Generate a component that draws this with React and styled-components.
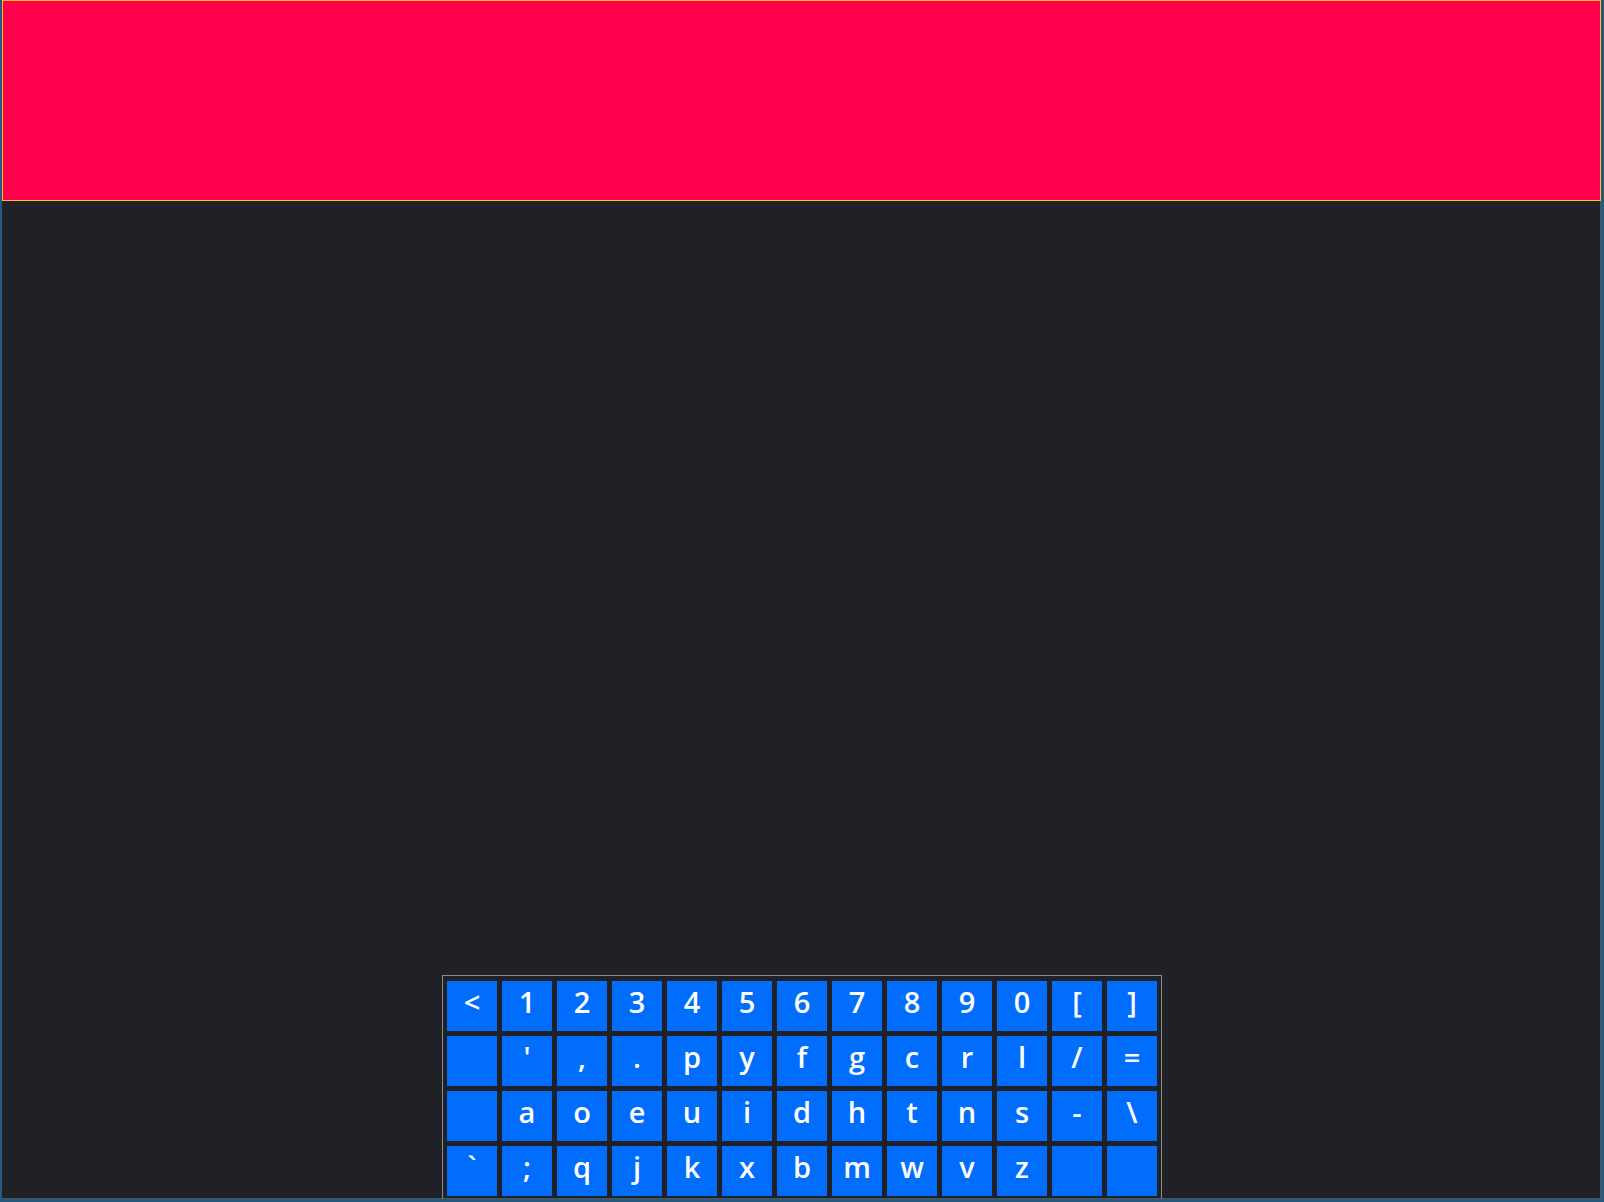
import React from "react";
import styled, { createGlobalStyle } from "styled-components";

const GlobalStyle = createGlobalStyle`
  html, body {
    margin: 0;
    padding: 0;
    background: #25597f;
  }
  #root {
    padding: 0 3px 3px 2px;
  }
`;

const rows = [
  ["<", "1", "2", "3", "4", "5", "6", "7", "8", "9", "0", "[", "]"],
  ["", "'", ",", ".", "p", "y", "f", "g", "c", "r", "l", "/", "="],
  ["", "a", "o", "e", "u", "i", "d", "h", "t", "n", "s", "-", "\\"],
  ["`", ";", "q", "j", "k", "x", "b", "m", "w", "v", "z", "", ""]
];

const App = () => {
  return (
    <>
      <GlobalStyle />
      <Screen>
        <Banner />
        <Stage>
          <Keyboard>
            {rows.flat().map((k, i) => (
              <Key key={i}>{k}</Key>
            ))}
          </Keyboard>
        </Stage>
      </Screen>
    </>
  );
};

const Screen = styled.div`
  height: 1199px;
  display: flex;
  flex-direction: column;
  background: #1f2127;
  box-shadow: inset -1px -1px 0 #4a5560;
`;

const Banner = styled.header`
  height: 199px;
  flex-shrink: 0;
  background: #ff004d;
  border: 1px solid #ffc21c;
`;

const Stage = styled.main`
  flex: 1;
  display: flex;
  justify-content: center;
  align-items: flex-end;
`;

const Keyboard = styled.div`
  display: grid;
  grid-template-columns: repeat(13, 50px);
  grid-auto-rows: 50px;
  gap: 5px;
  padding: 5px 4px 3px 4px;
  border: 1px solid #8a8c90;
  border-bottom: none;
  margin-left: 1px;
`;

const Key = styled.div`
  background: #006dfd;
  color: #ffffff;
  display: flex;
  align-items: center;
  justify-content: center;
  padding-bottom: 10px;
  box-sizing: border-box;
  font-family: "Open Sans", "DejaVu Sans", sans-serif;
  font-weight: 600;
  font-size: 29px;
  line-height: 1;
`;

export default App;
